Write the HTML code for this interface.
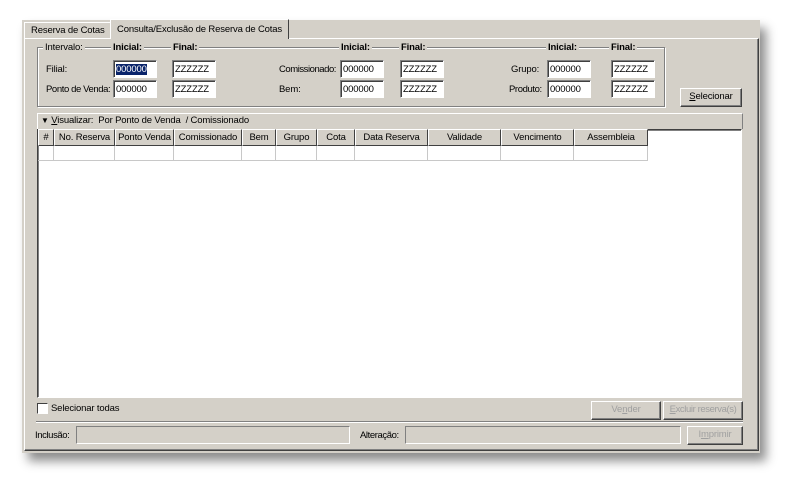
<!DOCTYPE html>
<html><head><meta charset="utf-8"><style>
*{margin:0;padding:0;box-sizing:border-box}
body{width:802px;height:497px;background:#fff;position:relative;overflow:hidden;font-family:"Liberation Sans",sans-serif;font-size:9.5px;letter-spacing:-0.15px;color:#000}
.a{position:absolute}
.win{left:22px;top:20px;width:738px;height:433px;background:#d4d0c8;box-shadow:6px 8px 10px rgba(0,0,0,.45)}
.panel{left:24px;top:38px;width:735px;height:413px;border-top:1px solid #fff;border-left:1px solid #fff;border-right:1px solid #404040;border-bottom:1px solid #404040;box-shadow:inset -1px -1px 0 #808080}
.tab{height:18px;border-top:1px solid #fff;border-left:1px solid #fff;border-right:1px solid #404040;padding:3px 6px;white-space:nowrap}
.inp{height:18px;width:44px;background:#fff;border-top:1px solid #808080;border-left:1px solid #808080;border-right:1px solid #fff;border-bottom:1px solid #fff;box-shadow:inset 1px 1px 0 #404040;padding:3px 2px;font-size:9.5px}
.lab{white-space:nowrap}
.b{font-weight:bold}
.btn{height:19px;border-top:1px solid #fff;border-left:1px solid #fff;border-right:1px solid #404040;border-bottom:1px solid #404040;box-shadow:inset -1px -1px 0 #808080;text-align:center;line-height:16px}
.dis{color:#a0a0a0}
.ro{height:18px;background:#d4d0c8;border-top:1px solid #808080;border-left:1px solid #808080;border-right:1px solid #fff;border-bottom:1px solid #fff}
.hd{top:129px;height:17px;border-right:1px solid #404040;border-bottom:1px solid #404040;border-left:1px solid #fff;border-top:1px solid #fff;background:#d4d0c8;text-align:center;line-height:15px;white-space:nowrap;overflow:hidden}
.cl{top:146px;height:15px;border-right:1px solid #c8c8c8;border-bottom:1px solid #c8c8c8}
</style></head><body>
<div class="a win"></div>
<div class="a panel"></div>
<div class="a tab" style="left:24px;top:22px;width:87px;height:16px;padding-top:2px">Reserva de Cotas</div>
<div class="a tab" style="left:110px;top:19px;width:179px;height:20px;background:#d4d0c8;border-left:1px solid #fff;padding-top:4px">Consulta/Exclusão de Reserva de Cotas</div>

<div class="a" style="left:37px;top:47px;width:628px;height:60px;border:1px solid #808080;box-shadow:1px 1px 0 #fff, inset 1px 1px 0 #fff"></div>
<div class="a lab" style="left:43px;top:42px;background:#d4d0c8;padding:0 2px">Intervalo:</div>
<div class="a lab b" style="left:111px;top:42px;background:#d4d0c8;padding:0 2px">Inicial:</div>
<div class="a lab b" style="left:171px;top:42px;background:#d4d0c8;padding:0 2px">Final:</div>
<div class="a lab b" style="left:339px;top:42px;background:#d4d0c8;padding:0 2px">Inicial:</div>
<div class="a lab b" style="left:399px;top:42px;background:#d4d0c8;padding:0 2px">Final:</div>
<div class="a lab b" style="left:546px;top:42px;background:#d4d0c8;padding:0 2px">Inicial:</div>
<div class="a lab b" style="left:609px;top:42px;background:#d4d0c8;padding:0 2px">Final:</div>

<div class="a lab" style="left:46px;top:64px">Filial:</div>
<div class="a lab" style="left:46px;top:84px;letter-spacing:-0.4px">Ponto de Venda:</div>
<div class="a inp" style="left:113px;top:60px"><span style="background:#0a246a;color:#fff">000000</span></div>
<div class="a inp" style="left:113px;top:80px">000000</div>
<div class="a inp" style="left:172px;top:60px">ZZZZZZ</div>
<div class="a inp" style="left:172px;top:80px">ZZZZZZ</div>

<div class="a lab" style="left:279px;top:64px;letter-spacing:-0.45px">Comissionado:</div>
<div class="a lab" style="left:279px;top:84px">Bem:</div>
<div class="a inp" style="left:340px;top:60px">000000</div>
<div class="a inp" style="left:340px;top:80px">000000</div>
<div class="a inp" style="left:400px;top:60px">ZZZZZZ</div>
<div class="a inp" style="left:400px;top:80px">ZZZZZZ</div>

<div class="a lab" style="left:511px;top:64px">Grupo:</div>
<div class="a lab" style="left:509px;top:84px;letter-spacing:-0.4px">Produto:</div>
<div class="a inp" style="left:547px;top:60px">000000</div>
<div class="a inp" style="left:547px;top:80px">000000</div>
<div class="a inp" style="left:611px;top:60px">ZZZZZZ</div>
<div class="a inp" style="left:611px;top:80px">ZZZZZZ</div>

<div class="a btn" style="left:680px;top:88px;width:62px"><u>S</u>elecionar</div>

<div class="a" style="left:37px;top:113px;width:706px;height:16px;border-top:1px solid #fff;border-left:1px solid #fff;border-right:1px solid #808080"></div>
<div class="a lab" style="left:41px;top:115px"><span style="font-size:8px">▼</span> <u>V</u>isualizar:&nbsp; Por Ponto de Venda&nbsp; / Comissionado</div>

<div class="a" style="left:37px;top:129px;width:705px;height:269px;background:#fff;border-left:1px solid #404040;border-top:1px solid #404040;border-right:1px solid #fff;border-bottom:1px solid #fff;box-shadow:inset 1px 1px 0 #808080"></div>
<div class="a hd" style="left:38px;width:16px">#</div>
<div class="a hd" style="left:54px;width:61px">No. Reserva</div>
<div class="a hd" style="left:115px;width:59px">Ponto Venda</div>
<div class="a hd" style="left:174px;width:68px">Comissionado</div>
<div class="a hd" style="left:242px;width:34px">Bem</div>
<div class="a hd" style="left:276px;width:41px">Grupo</div>
<div class="a hd" style="left:317px;width:38px">Cota</div>
<div class="a hd" style="left:355px;width:73px">Data Reserva</div>
<div class="a hd" style="left:428px;width:73px">Validade</div>
<div class="a hd" style="left:501px;width:73px">Vencimento</div>
<div class="a hd" style="left:574px;width:74px">Assembleia</div>
<div class="a cl" style="left:38px;width:16px"></div>
<div class="a cl" style="left:54px;width:61px"></div>
<div class="a cl" style="left:115px;width:59px"></div>
<div class="a cl" style="left:174px;width:68px"></div>
<div class="a cl" style="left:242px;width:34px"></div>
<div class="a cl" style="left:276px;width:41px"></div>
<div class="a cl" style="left:317px;width:38px"></div>
<div class="a cl" style="left:355px;width:73px"></div>
<div class="a cl" style="left:428px;width:73px"></div>
<div class="a cl" style="left:501px;width:73px"></div>
<div class="a cl" style="left:574px;width:74px"></div>

<div class="a" style="left:37px;top:403px;width:11px;height:11px;background:#fff;border-top:1px solid #404040;border-left:1px solid #404040;border-right:1px solid #fff;border-bottom:1px solid #fff"></div>
<div class="a lab" style="left:51px;top:403px">Selecionar todas</div>
<div class="a btn dis" style="left:591px;top:401px;width:70px">Ve<u>n</u>der</div>
<div class="a btn dis" style="left:663px;top:401px;width:80px;letter-spacing:-0.4px"><u>E</u>xcluir reserva(s)</div>
<div class="a" style="left:36px;top:421px;width:707px;height:2px;border-top:1px solid #808080;border-bottom:1px solid #fff"></div>
<div class="a lab" style="left:35px;top:430px;letter-spacing:-0.4px">Inclusão:</div>
<div class="a ro" style="left:76px;top:426px;width:274px"></div>
<div class="a lab" style="left:360px;top:430px;letter-spacing:-0.4px">Alteração:</div>
<div class="a ro" style="left:405px;top:426px;width:276px"></div>
<div class="a btn dis" style="left:687px;top:426px;width:56px">I<u>m</u>primir</div>
</body></html>
